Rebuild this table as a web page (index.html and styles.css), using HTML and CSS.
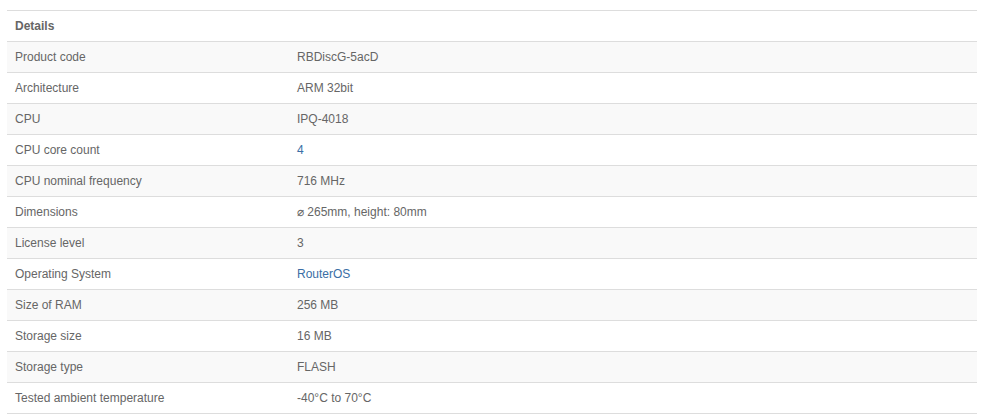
FILE: index.html
```html
<!DOCTYPE html>
<html>
<head>
<meta charset="utf-8">
<link rel="stylesheet" href="styles.css">
</head>
<body>
<div class="wrap">
<table class="specs">
  <thead>
    <tr><th colspan="2">Details</th></tr>
  </thead>
  <tbody>
    <tr><td class="k">Product code</td><td>RBDiscG-5acD</td></tr>
    <tr><td class="k">Architecture</td><td>ARM 32bit</td></tr>
    <tr><td class="k">CPU</td><td>IPQ-4018</td></tr>
    <tr><td class="k">CPU core count</td><td><a href="#">4</a></td></tr>
    <tr><td class="k">CPU nominal frequency</td><td>716 MHz</td></tr>
    <tr><td class="k">Dimensions</td><td>⌀ 265mm, height: 80mm</td></tr>
    <tr><td class="k">License level</td><td>3</td></tr>
    <tr><td class="k">Operating System</td><td><a href="#">RouterOS</a></td></tr>
    <tr><td class="k">Size of RAM</td><td>256 MB</td></tr>
    <tr><td class="k">Storage size</td><td>16 MB</td></tr>
    <tr><td class="k">Storage type</td><td>FLASH</td></tr>
    <tr><td class="k">Tested ambient temperature</td><td>-40°C to 70°C</td></tr>
  </tbody>
</table>
</div>
</body>
</html>
```
FILE: styles.css
```css
html, body {
  margin: 0;
  padding: 0;
  background: #fff;
}
body {
  font-family: "Liberation Sans", Arial, sans-serif;
  font-size: 12px;
  color: #666;
}
.wrap {
  padding: 10px 14px 0 7px;
}
.specs {
  width: 970px;
  border-collapse: collapse;
  border-top: 1px solid #ddd;
}
.specs th,
.specs td {
  height: 30px;
  padding: 0 8px;
  text-align: left;
  vertical-align: middle;
  border-bottom: 1px solid #ddd;
  line-height: 14px;
}
.specs th {
  font-weight: bold;
  color: #666;
}
.specs td.k {
  width: 266px;
}
.specs tbody tr:nth-child(odd) {
  background: #f9f9f9;
}
.specs a {
  color: #3a6ea5;
  text-decoration: none;
}
```
